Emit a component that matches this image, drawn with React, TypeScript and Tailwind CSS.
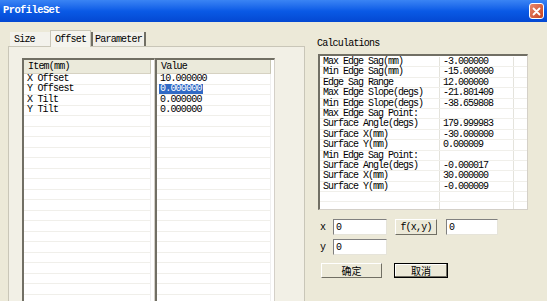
import React from 'react';

const items = ['X Offset', 'Y Offsest', 'X Tilt', 'Y Tilt'];
const values = ['10.000000', '0.000000', '0.000000', '0.000000'];

const calcs: [string, string][] = [
   ['Max Edge Sag(mm)', '-3.000000'],
   ['Min Edge Sag(mm)', '-15.000000'],
   ['Edge Sag Range', '12.000000'],
   ['Max Edge Slope(degs)', '-21.801409'],
   ['Min Edge Slope(degs)', '-38.659808'],
   ['Max Edge Sag Point:', ''],
   ['Surface Angle(degs)', '179.999983'],
   ['Surface X(mm)', '-30.000000'],
   ['Surface Y(mm)', '0.000009'],
   ['Min Edge Sag Point:', ''],
   ['Surface Angle(degs)', '-0.000017'],
   ['Surface X(mm)', '30.000000'],
   ['Surface Y(mm)', '-0.000009'],
   ['', ''],
   ['', ''],
];

const mono = "font-['Liberation_Mono','DejaVu_Sans_Mono',monospace]";
const cjk = "font-['Noto_Sans_CJK_SC',sans-serif]";

const ListCol = ({ header, rows, selected, w }: { header: string; rows: string[]; selected?: number; w: string }) => (
   <div className={`${w} h-full flex flex-col bg-white border-l-2 border-t-2 border-[#716F64] border-r border-r-[#D4D0C8] overflow-hidden`}>
      <div className="h-[14px] shrink-0 flex items-center pl-[4px] bg-[#EBEADB] border-b border-[#D6D2C2] border-r border-r-[#C7C5B2] mr-[3px]">
         <span className="text-[10px] tracking-[-0.8px] text-black">{header}</span>
      </div>
      <div className="flex-1 flex flex-col mr-[3px] border-r border-[#F0F0F0]">
         {Array.from({ length: 22 }).map((_, i) => (
            <div key={i} className="h-[10.5px] shrink-0 flex items-center pl-[2px] border-b border-[#F0EFEA]">
               {rows[i] && (
                  <span
                     className={`text-[10px] tracking-[-0.8px] leading-[10px] px-[1px] ${
                        selected === i ? 'bg-[#316AC5] text-white' : 'text-black'
                     }`}
                  >
                     {rows[i]}
                  </span>
               )}
            </div>
         ))}
      </div>
   </div>
);

const Input = ({ w }: { w: string }) => (
   <div className={`${w} h-[16px] bg-white border-t border-l border-[#808080] border-r border-b border-r-[#E6E4DA] border-b-[#E6E4DA] flex items-center pl-[2px]`}>
      <span className="text-[10px] text-black">0</span>
   </div>
);

export default function App() {
   return (
      <div className={`w-[547px] h-[301px] bg-[#ECE9D8] flex flex-col overflow-hidden ${mono}`}>
         <div className="h-[22px] shrink-0 flex items-center justify-between pl-[3px] pr-[3px] bg-gradient-to-b from-[#3A84F4] via-[#0A5AE6] to-[#0448D2]">
            <span className="text-white font-bold text-[10.5px] tracking-[-0.6px]">ProfileSet</span>
            <div className="w-[15px] h-[16px] rounded-[3px] border border-white bg-gradient-to-br from-[#E8866A] to-[#C6421E] flex items-center justify-center">
               <svg width="9" height="9" viewBox="0 0 9 9">
                  <path d="M1.5 1.5 L7.5 7.5 M7.5 1.5 L1.5 7.5" stroke="white" strokeWidth="1.8" strokeLinecap="round" />
               </svg>
            </div>
         </div>

         <div className="flex-1 flex">
            <div className="w-[305px] pl-[8px] pt-[8px] pb-[7px] flex flex-col">
               <div className="h-[16px] shrink-0 flex items-end text-[10px] tracking-[-0.8px] text-black">
                  <div className="w-[40px] h-[14px] ml-[2px] bg-[#F3F2EC] flex items-center pl-[4px]">Size</div>
                  <div className="w-[41px] h-[17px] bg-[#F5F4EE] border-l border-t border-r border-[#C9C6B8] flex items-center justify-center -mb-[1px] relative">
                     Offset
                  </div>
                  <div className="w-[55px] h-[14px] border-l-2 border-r-2 border-[#716F64] bg-[#F1F0EA] flex items-center justify-center">
                     Parameter
                  </div>
               </div>
               <div className="flex-1 flex bg-[#F2F0E6] border border-[#C9C6B8] pl-[13px] pt-[11px]">
                  <ListCol header="Item(mm)" rows={items} w="w-[133px]" />
                  <ListCol header="Value" rows={values} selected={1} w="w-[120px]" />
               </div>
            </div>

            <div className="flex-1 pl-[12px] pt-[15px] flex flex-col">
               <div className="h-[12px] flex items-center text-[10px] tracking-[-0.8px] text-black">Calculations</div>
               <div className="mt-[5px] ml-[1px] w-[210px] h-[156px] bg-white border-l-2 border-t-2 border-[#716F64] border-r border-b border-r-[#D4D0C8] border-b-[#D4D0C8] pt-[1px] overflow-hidden">
                  {calcs.map(([k, v], i) => (
                     <div key={i} className="h-[10.4px] flex border-b border-[#F0EFEA] text-[10px] tracking-[-1px] leading-[10px] text-black">
                        <div className="w-[120px] pl-[3px] border-r border-[#E4E3DC]">{k}</div>
                        <div className="w-[74px] pl-[3px] border-r border-[#E4E3DC]">{v}</div>
                        <div className="flex-1" />
                     </div>
                  ))}
               </div>

               <div className="mt-[9px] flex items-center">
                  <span className="w-[16px] pl-[3px] text-[10px] text-black">x</span>
                  <Input w="w-[54px]" />
                  <button className="ml-[8px] w-[42px] h-[16px] bg-[#ECE9D8] border border-t-white border-l-white border-r-[#716F64] border-b-[#716F64] text-[10px] tracking-[-0.8px] text-black flex items-center justify-center">
                     f(x,y)
                  </button>
                  <div className="ml-[9px]">
                     <Input w="w-[52px]" />
                  </div>
               </div>
               <div className="mt-[4px] flex items-center">
                  <span className="w-[16px] pl-[3px] text-[10px] text-black">y</span>
                  <Input w="w-[54px]" />
               </div>
               <div className="mt-[8px] flex items-center">
                  <button className={`ml-[4px] w-[61px] h-[15px] bg-[#ECE9D8] border border-t-white border-l-white border-r-[#716F64] border-b-[#716F64] text-[10px] leading-none text-black flex items-center justify-center ${cjk}`}>
                     确定
                  </button>
                  <button className={`ml-[12px] w-[54px] h-[15px] bg-[#ECE9D8] border border-black shadow-[inset_-1px_-1px_0_#716F64,inset_1px_1px_0_#fff] text-[10px] leading-none text-black flex items-center justify-center ${cjk}`}>
                     取消
                  </button>
               </div>
            </div>
         </div>

         <div className="h-[3px] shrink-0 bg-[#0841D0]" />
      </div>
   );
}
